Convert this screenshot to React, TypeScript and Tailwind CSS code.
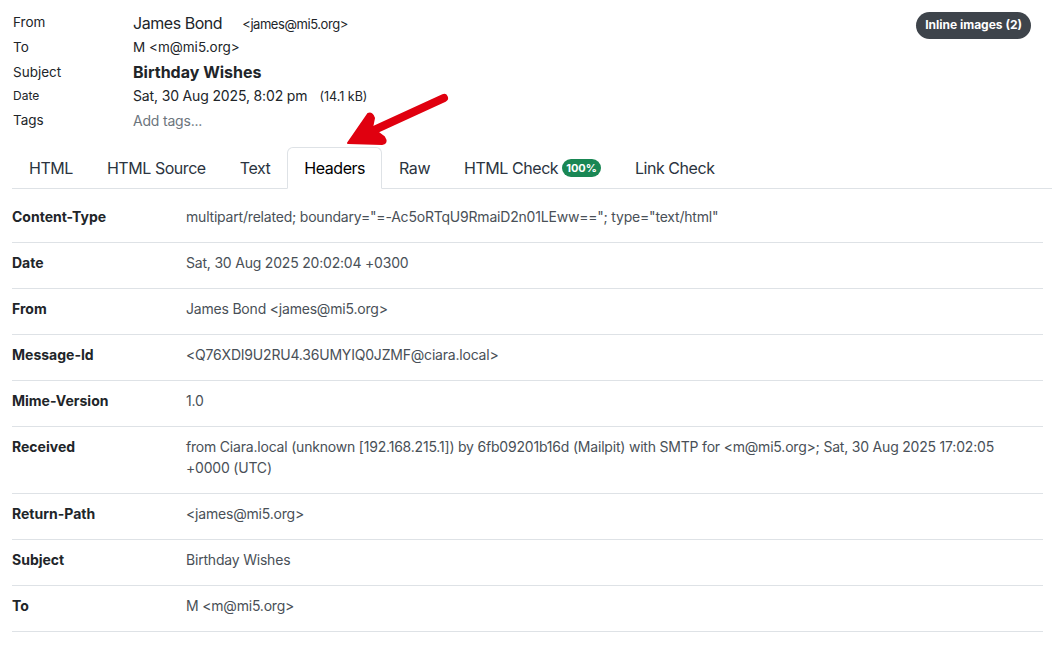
import React from "react";

const headers: [string, string][] = [
  ["Content-Type", 'multipart/related; boundary="=-Ac5oRTqU9RmaiD2n01LEww=="; type="text/html"'],
  ["Date", "Sat, 30 Aug 2025 20:02:04 +0300"],
  ["From", "James Bond <james@mi5.org>"],
  ["Message-Id", "<Q76XDI9U2RU4.36UMYIQ0JZMF@ciara.local>"],
  ["Mime-Version", "1.0"],
  [
    "Received",
    "from Ciara.local (unknown [192.168.215.1]) by 6fb09201b16d (Mailpit) with SMTP for <m@mi5.org>; Sat, 30 Aug 2025 17:02:05 +0000 (UTC)",
  ],
  ["Return-Path", "<james@mi5.org>"],
  ["Subject", "Birthday Wishes"],
  ["To", "M <m@mi5.org>"],
];

function Tab({ label, active, badge }: { label: string; active?: boolean; badge?: string }) {
  return (
    <div
      className={
        "flex items-center h-[42px] px-4 border rounded-t-[6px] text-[16px] tracking-[-0.45px] " +
        (active
          ? "border-[#dee2e6] border-b-white bg-white text-[#000]"
          : "border-transparent text-[#2b3440]")
      }
    >
      <span>{label}</span>
      {badge && (
        <span className="ml-[4px] inline-flex items-center h-[18px] px-[4px] rounded-full bg-[#198754] text-white text-[11px] font-bold tracking-normal">
          {badge}
        </span>
      )}
    </div>
  );
}

export default function App() {
  return (
    <div
      className="relative w-[1052px] h-[646px] bg-white overflow-hidden text-[#212529]"
      style={{ fontFamily: "Inter, 'Noto Sans', sans-serif" }}
    >
      {/* Message summary */}
      <div className="flex justify-between pl-[13px] pr-[21px] pt-[10px]">
        <div className="flex flex-col text-[14px]">
          <div className="flex items-center h-[25px]">
            <div className="w-[120px] text-[13.5px]">From</div>
            <div className="flex items-baseline">
              <span className="text-[16px] tracking-[-0.45px]">James Bond</span>
              <span className="ml-[20px] text-[13px] tracking-[-0.45px]">&lt;james@mi5.org&gt;</span>
            </div>
          </div>
          <div className="flex items-center h-[25px]">
            <div className="w-[120px] text-[13.5px]">To</div>
            <div className="text-[13.5px]">M &lt;m@mi5.org&gt;</div>
          </div>
          <div className="flex items-center h-[24px]">
            <div className="w-[120px] text-[13.5px]">Subject</div>
            <div className="text-[16px] font-bold">Birthday Wishes</div>
          </div>
          <div className="flex items-center h-[23px]">
            <div className="w-[120px] text-[12px]">Date</div>
            <div className="flex items-baseline">
              <span className="text-[14px] tracking-[-0.15px]">Sat, 30 Aug 2025, 8:02 pm</span>
              <span className="ml-[12px] text-[12.5px]">(14.1 kB)</span>
            </div>
          </div>
          <div className="flex items-center h-[26px]">
            <div className="w-[120px] text-[13.5px]">Tags</div>
            <div className="text-[14px] text-[#6c757d] tracking-[-0.2px]">Add tags...</div>
          </div>
        </div>
        <div className="pt-[1px]">
          <span className="inline-flex items-center h-[27px] px-[9px] rounded-full bg-[#3e444b] text-white text-[12px] font-bold">
            Inline images (2)
          </span>
        </div>
      </div>

      {/* Tabs */}
      <div className="mt-[14px] ml-[12px] flex border-b border-[#dee2e6]">
        <div className="flex -mb-px">
          <Tab label="HTML" />
          <Tab label="HTML Source" />
          <Tab label="Text" />
          <Tab label="Headers" active />
          <Tab label="Raw" />
          <Tab label="HTML Check" badge="100%" />
          <Tab label="Link Check" />
        </div>
      </div>

      {/* Headers table */}
      <div className="ml-[12px] mr-[9px] mt-[8px] text-[14px]">
        {headers.map(([k, v]) => (
          <div key={k} className="flex border-b border-[#dee2e6] pt-[9px] pb-[15px] leading-[21px]">
            <div className="w-[174px] shrink-0 font-bold text-[#212529]">{k}</div>
            <div className="flex-1 pr-[14px] text-[#495057] tracking-[-0.2px]">{v}</div>
          </div>
        ))}
      </div>

      {/* Red arrow annotation */}
      <svg className="absolute left-0 top-0 pointer-events-none" width="1052" height="646">
        <line x1="444" y1="98" x2="372" y2="131" stroke="#e0000f" strokeWidth="8" strokeLinecap="round" />
        <path
          d="M348 143 L368 114 Q372 112 374 118 L372 128 L384 137 Q388 143 382 144 Z"
          fill="#e0000f"
          stroke="#e0000f"
          strokeWidth="2"
          strokeLinejoin="round"
        />
      </svg>
    </div>
  );
}
